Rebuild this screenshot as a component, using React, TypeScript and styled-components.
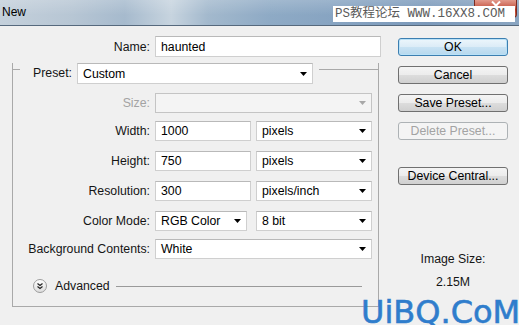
import React from "react";
import styled, { createGlobalStyle, css } from "styled-components";

const GlobalStyle = createGlobalStyle`
  html, body {
    margin: 0;
    padding: 0;
    background: #f0f0f0;
  }
  body {
    font-family: "Liberation Sans", Arial, sans-serif;
    font-size: 12.3px;
    color: #111;
  }
`;

const Dialog = styled.div`
  position: relative;
  width: 519px;
  height: 325px;
  overflow: hidden;
  background: #f0f0f0;
`;

const TitleBar = styled.div`
  height: 25px;
  display: flex;
  align-items: flex-start;
  border-bottom: 1px solid #56697d;
  background:
    linear-gradient(180deg, rgba(255, 255, 255, 0.18), rgba(255, 255, 255, 0) 60%),
    linear-gradient(90deg, #c4d0db 0%, #b7c6d4 14%, #a6bacd 24%, #c7d4df 33%, #a3b9cd 40%, #8eaac5 52%, #86a3c1 66%, #7b99ba 82%, #8aa5c1 100%);
`;

const Caption = styled.span`
  margin: 5px 0 0 2px;
  font-size: 12px;
  color: #000;
`;

const CloseButton = styled.div`
  margin-left: auto;
  margin-right: 2px;
  width: 43px;
  height: 18px;
  border: 1px solid #7a2a22;
  border-top: none;
  border-radius: 0 0 4px 4px;
  background: linear-gradient(180deg, #e29a8c 0%, #c75a48 45%, #b5321f 55%, #d2704d 100%);
  display: flex;
  justify-content: center;
  padding-top: 1px;
  box-sizing: border-box;
`;

const WebMark = styled.div`
  position: absolute;
  top: 6px;
  left: 333px;
  width: 182px;
  height: 16px;
  background: #fff;
  color: #5a5a5a;
  font-family: "Liberation Mono", "Noto Sans CJK SC", monospace;
  font-size: 12.5px;
  line-height: 16px;
  padding-left: 2px;
  box-sizing: border-box;
  white-space: nowrap;
`;

const SiteMark = styled.div`
  position: absolute;
  left: 361px;
  top: 299px;
  color: #2f7dcc;
  font-family: "DejaVu Sans", Verdana, sans-serif;
  font-size: 32px;
  line-height: 26px;
  -webkit-text-stroke: 0.6px #2f7dcc;
  white-space: nowrap;
`;

const Body = styled.div`
  display: flex;
`;

const LeftColumn = styled.div`
  width: 388px;
  padding-top: 10px;
`;

const RightColumn = styled.div`
  margin-left: 10px;
  width: 110px;
  padding-top: 12px;
  display: flex;
  flex-direction: column;
  align-items: center;
`;

const Row = styled.div<{ $top?: number }>`
  display: flex;
  align-items: center;
  margin-top: ${(p) => p.$top ?? 0}px;
`;

const Label = styled.div<{ $width: number; $disabled?: boolean }>`
  width: ${(p) => p.$width}px;
  margin-right: 5px;
  text-align: right;
  white-space: nowrap;
  color: ${(p) => (p.$disabled ? "#a3a3a3" : "#151515")};
`;

const fieldBox = css`
  box-sizing: border-box;
  display: flex;
  align-items: center;
  padding: 0 5px 0 5px;
  border: 1px solid #cfcfcf;
  border-top-color: #b9b9b9;
  background: #fff;
  color: #000;
  white-space: nowrap;
`;

const TextField = styled.div<{ $width: number; $height?: number }>`
  ${fieldBox};
  width: ${(p) => p.$width}px;
  height: ${(p) => p.$height ?? 20}px;
`;

const Select = styled.div<{ $width: number; $height?: number; $gap?: number; $disabled?: boolean }>`
  ${fieldBox};
  width: ${(p) => p.$width}px;
  height: ${(p) => p.$height ?? 20}px;
  margin-left: ${(p) => p.$gap ?? 0}px;
  justify-content: space-between;
  ${(p) =>
    p.$disabled &&
    css`
      background: #f4f4f4;
      border-color: #c4c4c4;
    `}
`;

const Group = styled.div`
  margin: 12px 0 0 12px;
  width: 367px;
  height: 244px;
  box-sizing: border-box;
  border: 1px solid #a9a9a9;
  border-top: none;
`;

const GroupHead = styled.div`
  display: flex;
  align-items: flex-start;
  margin-top: -6px;
`;

const Rule = styled.div<{ $width?: number; $gap?: number }>`
  margin-top: 6px;
  margin-left: ${(p) => p.$gap ?? 0}px;
  height: 0;
  border-top: 1px solid #a9a9a9;
  ${(p) => (p.$width ? `width: ${p.$width}px;` : "flex: 1;")}
`;

const HeadLabel = styled(Label)`
  line-height: 21px;
`;

const AdvancedRow = styled.div`
  display: flex;
  align-items: center;
  margin: 20px 16px 0 20px;
`;

const AdvancedText = styled.span`
  margin-left: 8px;
  color: #151515;
`;

const AdvancedLine = styled.div`
  flex: 1;
  margin-left: 6px;
  border-top: 1px solid #9a9a9a;
`;

const Button = styled.div<{ $top?: number; $primary?: boolean; $disabled?: boolean }>`
  box-sizing: border-box;
  width: 110px;
  height: 18px;
  margin-top: ${(p) => p.$top ?? 0}px;
  border: 1px solid #707070;
  border-radius: 3px;
  background: linear-gradient(180deg, #f4f4f4 0%, #ececec 48%, #dcdcdc 52%, #d0d0d0 100%);
  display: flex;
  align-items: center;
  justify-content: center;
  color: #000;
  white-space: nowrap;
  ${(p) =>
    p.$primary &&
    css`
      border-color: #3c7fb1;
      background: linear-gradient(180deg, #ecf6fc 0%, #dcecf7 48%, #c8e2f3 52%, #b6d8ee 100%);
      box-shadow: inset 0 0 0 1px #b9e1f7;
    `}
  ${(p) =>
    p.$disabled &&
    css`
      border-color: #adb2b5;
      background: #f4f4f4;
      color: #a3a3a3;
    `}
`;

const SizeInfo = styled.div<{ $top: number }>`
  margin-top: ${(p) => p.$top}px;
  line-height: 14px;
  color: #151515;
`;

const Arrow = ({ disabled }: { disabled?: boolean }) => (
  <svg width="7" height="4" viewBox="0 0 7 4">
    <path d="M0 0H7L3.5 4Z" fill={disabled ? "#a8a8a8" : "#000"} />
  </svg>
);

const CloseGlyph = () => (
  <svg width="10" height="9" viewBox="0 0 10 9">
    <path d="M1 0.5L9 8.5M9 0.5L1 8.5" stroke="#fff" strokeWidth="2" />
  </svg>
);

const ExpandIcon = () => (
  <svg width="14" height="14" viewBox="0 0 14 14">
    <defs>
      <linearGradient id="adv" x1="0" y1="0" x2="0" y2="1">
        <stop offset="0" stopColor="#ffffff" />
        <stop offset="1" stopColor="#dcdcdc" />
      </linearGradient>
    </defs>
    <circle cx="7" cy="7" r="6.5" fill="url(#adv)" stroke="#9c9c9c" />
    <path d="M4.5 4.5L7 6.5L9.5 4.5M4.5 7.5L7 9.5L9.5 7.5" fill="none" stroke="#222" strokeWidth="1.2" />
  </svg>
);

const units = [
  { label: "Width:", value: "1000", unit: "pixels", top: 8 },
  { label: "Height:", value: "750", unit: "pixels", top: 10 },
  { label: "Resolution:", value: "300", unit: "pixels/inch", top: 10 },
];

export default function App() {
  return (
    <Dialog>
      <GlobalStyle />
      <TitleBar>
        <Caption>New</Caption>
        <CloseButton>
          <CloseGlyph />
        </CloseButton>
      </TitleBar>
      <Body>
        <LeftColumn>
          <Row>
            <Label $width={150}>Name:</Label>
            <TextField $width={226} $height={21}>haunted</TextField>
          </Row>
          <Group>
            <GroupHead>
              <Rule $width={7} />
              <HeadLabel $width={52}>Preset:</HeadLabel>
              <Select $width={236} $height={21}>
                Custom
                <Arrow />
              </Select>
              <Rule $gap={6} />
            </GroupHead>
            <Row $top={9}>
              <Label $width={137} $disabled>Size:</Label>
              <Select $width={217} $disabled>
                <span />
                <Arrow disabled />
              </Select>
            </Row>
            {units.map((u) => (
              <Row key={u.label} $top={u.top}>
                <Label $width={137}>{u.label}</Label>
                <TextField $width={96}>{u.value}</TextField>
                <Select $width={116} $gap={5}>
                  {u.unit}
                  <Arrow />
                </Select>
              </Row>
            ))}
            <Row $top={10}>
              <Label $width={137}>Color Mode:</Label>
              <Select $width={92}>
                RGB Color
                <Arrow />
              </Select>
              <Select $width={116} $gap={9}>
                8 bit
                <Arrow />
              </Select>
            </Row>
            <Row $top={8}>
              <Label $width={137}>Background Contents:</Label>
              <Select $width={217}>
                White
                <Arrow />
              </Select>
            </Row>
            <AdvancedRow>
              <ExpandIcon />
              <AdvancedText>Advanced</AdvancedText>
              <AdvancedLine />
            </AdvancedRow>
          </Group>
        </LeftColumn>
        <RightColumn>
          <Button $primary>OK</Button>
          <Button $top={10}>Cancel</Button>
          <Button $top={10}>Save Preset...</Button>
          <Button $top={10} $disabled>Delete Preset...</Button>
          <Button $top={27}>Device Central...</Button>
          <SizeInfo $top={67}>Image Size:</SizeInfo>
          <SizeInfo $top={9}>2.15M</SizeInfo>
        </RightColumn>
      </Body>
      <WebMark>PS教程论坛 WWW.16XX8.COM</WebMark>
      <SiteMark>UiBQ.CoM</SiteMark>
    </Dialog>
  );
}
